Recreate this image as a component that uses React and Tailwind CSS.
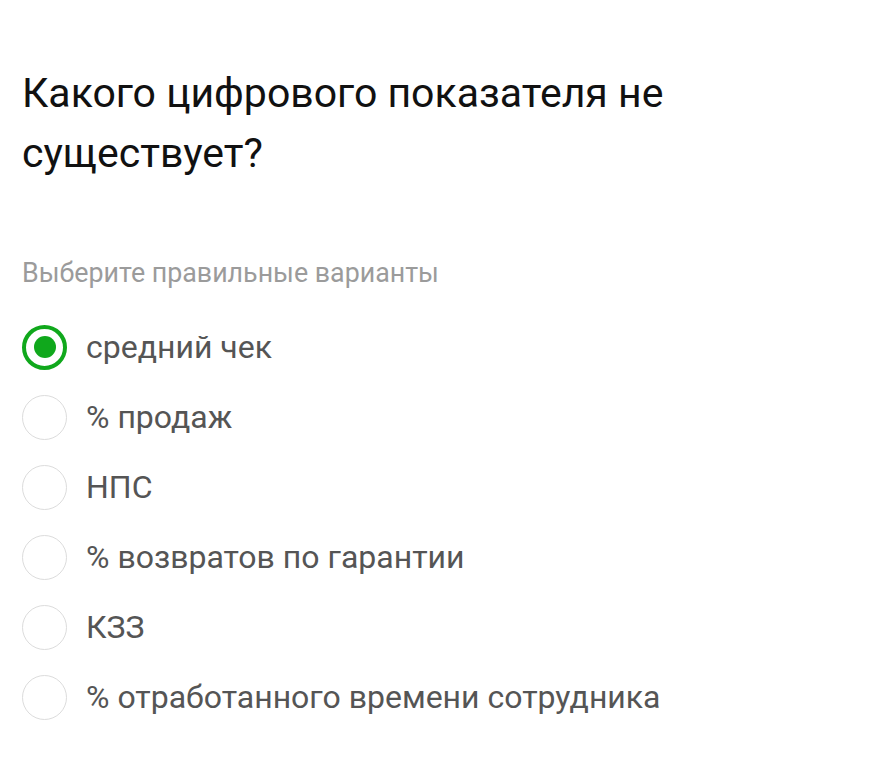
import React, { useState } from "react";

const options = [
  "средний чек",
  "% продаж",
  "НПС",
  "% возвратов по гарантии",
  "КЗЗ",
  "% отработанного времени сотрудника",
];

const Radio = ({ checked }) => (
  <div
    className={`w-[45px] h-[45px] shrink-0 rounded-full flex items-center justify-center ${
      checked ? "border-[4px] border-[#10a81c]" : "border-[1.5px] border-[#dcdcdc]"
    }`}
  >
    {checked && <div className="w-[22px] h-[22px] rounded-full bg-[#10a81c]" />}
  </div>
);

export default function App() {
  const [selected, setSelected] = useState(0);

  return (
    <div
      className="min-h-screen bg-white pl-[22px] pr-6 pt-[63px]"
      style={{ fontFamily: "Roboto, 'Noto Sans', sans-serif" }}
    >
      <h1 className="text-[41px] leading-[60px] text-[#111] font-normal max-w-[700px]">
        Какого цифрового показателя не существует?
      </h1>

      <p className="mt-[75px] text-[26.8px] leading-[30px] text-[#9b9b9b]">
        Выберите правильные варианты
      </p>

      <div className="mt-[36px] flex flex-col gap-[24px]">
        {options.map((opt, i) => (
          <label
            key={opt}
            className="flex items-center gap-[19px] cursor-pointer"
            onClick={() => setSelected(i)}
          >
            <Radio checked={selected === i} />
            <span className="text-[32px] leading-[46px] text-[#555]">{opt}</span>
          </label>
        ))}
      </div>
    </div>
  );
}
